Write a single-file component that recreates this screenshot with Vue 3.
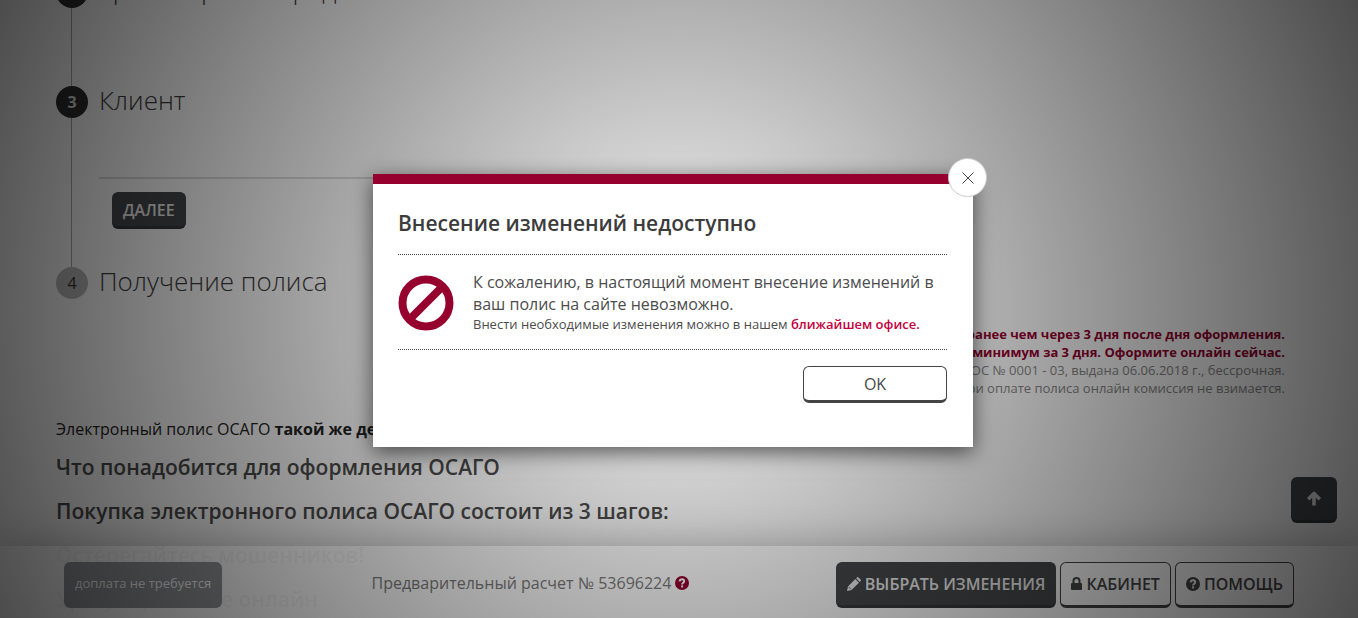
<script setup>
import { ref } from 'vue'

const open = ref(true)
const notes = [
  { text: 'не ранее чем через 3 дня после дня оформления.', strong: true },
  { text: 'минимум за 3 дня. Оформите онлайн сейчас.', strong: true },
  { text: 'ОС № 0001 - 03, выдана 06.06.2018 г., бессрочная.', strong: false },
  { text: 'При оплате полиса онлайн комиссия не взимается.', strong: false },
]
const sections = [
  'Что понадобится для оформления ОСАГО',
  'Покупка электронного полиса ОСАГО состоит из 3 шагов:',
  'Остерегайтесь мошенников!',
  'Урегулирование онлайн',
]
</script>

<template>
  <div class="screen">
    <main class="page">
      <section class="step step-vehicle">
        <span class="num">2</span>
        <h2>Транспортное средство</h2>
      </section>
      <section class="step step-client">
        <span class="num">3</span>
        <div class="step-body">
          <h2>Клиент</h2>
          <div class="step-actions">
            <button class="btn dark next" type="button">ДАЛЕЕ</button>
          </div>
        </div>
      </section>
      <section class="step step-policy">
        <span class="num muted">4</span>
        <h2>Получение полиса</h2>
      </section>
      <div class="notes">
        <p v-for="n in notes" :key="n.text" :class="{ strong: n.strong }">{{ n.text }}</p>
      </div>
      <p class="lead">Электронный полис ОСАГО <b>такой же действительный</b></p>
      <h3 v-for="s in sections" :key="s">{{ s }}</h3>
    </main>

    <button class="btn dark to-top" type="button" aria-label="Наверх">
      <svg width="16" height="16" viewBox="0 0 16 16"><path d="M8 14.500V3.500M2.200 8.300L8 2.500L13.800 8.300" fill="none" stroke="currentColor" stroke-width="3.600" stroke-linejoin="round" /></svg>
    </button>

    <footer class="bar">
      <div class="bar-inner">
        <div><span class="chip">доплата не требуется</span></div>
        <div class="bar-main">
          <span class="calc">Предварительный расчет № 53696224
            <svg class="help" width="14" height="14" viewBox="0 0 14 14"><circle cx="7" cy="7" r="7" fill="currentColor" /><path d="M4.700 5.300C4.900 3.700 6 3.300 7 3.300C8.200 3.300 9.200 4 9.200 5.200C9.200 6.800 7.100 6.700 7.100 8.500" fill="none" stroke="#fff" stroke-width="2" /><rect x="6.100" y="9.400" width="2" height="2" fill="#fff" /></svg>
          </span>
          <div class="bar-buttons">
            <button class="btn dark" type="button">
              <svg width="14" height="14" viewBox="0 0 14 14"><path fill="currentColor" d="M0 14L1 9.400L8.300 2.100L11.900 5.700L4.600 13ZM9.100 1.300L10 .4Q10.700-.2 11.400.4L13.600 2.600Q14.200 3.300 13.600 4L12.700 4.900Z" /><path d="M1.800 10.100L3.900 12.200" stroke="#45484b" stroke-width=".8" /></svg>
              <span>ВЫБРАТЬ ИЗМЕНЕНИЯ</span>
            </button>
            <button class="btn light" type="button">
              <svg width="11" height="14" viewBox="0 0 11 14"><rect y="6" width="11" height="7" rx="1" fill="currentColor" /><path d="M2.500 6.500V4a3 3 0 0 1 6 0V6.500" fill="none" stroke="currentColor" stroke-width="2" /></svg>
              <span>КАБИНЕТ</span>
            </button>
            <button class="btn light" type="button">
              <svg width="14" height="14" viewBox="0 0 14 14"><circle cx="7" cy="7" r="7" fill="currentColor" /><path d="M4.700 5.300C4.900 3.700 6 3.300 7 3.300C8.200 3.300 9.200 4 9.200 5.200C9.200 6.800 7.100 6.700 7.100 8.500" fill="none" stroke="#fff" stroke-width="2" /><rect x="6.100" y="9.400" width="2" height="2" fill="#fff" /></svg>
              <span>ПОМОЩЬ</span>
            </button>
          </div>
        </div>
      </div>
    </footer>

    <div v-if="open" class="overlay">
      <div class="modal" role="dialog" aria-modal="true" aria-labelledby="dialog-title">
        <button class="close" type="button" aria-label="Закрыть" @click="open = false">
          <svg width="12" height="12" viewBox="0 0 12 12"><path d="M.5 .5L11.500 11.500M11.500 .5L.5 11.500" stroke="#444" stroke-width="1" /></svg>
        </button>
        <h1 id="dialog-title">Внесение изменений недоступно</h1>
        <div class="message">
          <svg class="ban" width="56" height="56" viewBox="0 0 56 56" fill="none" stroke="#96002f" stroke-width="8"><circle cx="28" cy="28" r="23.500" /><path d="M11.500 44.500L44.500 11.500" /></svg>
          <div>
            <p class="text">К сожалению, в настоящий момент внесение изменений в ваш полис на сайте невозможно.</p>
            <p class="small">Внести необходимые изменения можно в нашем <a href="#">ближайшем офисе.</a></p>
          </div>
        </div>
        <div class="modal-actions">
          <button class="btn light ok" type="button" @click="open = false">OK</button>
        </div>
      </div>
    </div>
  </div>
</template>

<style>
body {
  margin: 0;
}
</style>

<style scoped>
.screen {
  position: relative;
  height: 100vh;
  overflow: hidden;
  background: #fff;
  color: #3c3c3c;
  font-family: "Open Sans", "Noto Sans", sans-serif;
  font-size: 16px;
}
h1, h2, h3, p {
  margin: 0;
}
button {
  font-family: inherit;
  cursor: pointer;
}
svg {
  flex: none;
}
.page {
  margin-top: -24px;
  padding: 0 73px 0 56px;
}
.step {
  position: relative;
  display: flex;
  gap: 11px;
}
.step-vehicle {
  height: 110px;
}
.step-client {
  height: 181px;
}
.step-policy {
  height: 58px;
}
.step:not(.step-policy)::before {
  content: "";
  position: absolute;
  left: 15px;
  top: 0;
  bottom: 0;
  width: 1px;
  background: #aaa;
}
.num {
  position: relative;
  flex: none;
  width: 32px;
  height: 32px;
  border-radius: 50%;
  background: #2e2e2e;
  color: #ddd;
  font-weight: 700;
  line-height: 32px;
  text-align: center;
}
.num.muted {
  background: #bbb;
  color: #333;
  font-weight: 400;
}
h2 {
  font-size: 26px;
  font-weight: 300;
  line-height: 28px;
}
.step-vehicle h2 {
  line-height: 26px;
}
.step-body {
  flex: 1;
}
.step-actions {
  width: 60%;
  margin-top: 63px;
  padding: 13px;
  border-top: 2px solid #ddd;
}
.btn {
  display: inline-flex;
  align-items: center;
  justify-content: center;
  gap: 4px;
  box-sizing: border-box;
  height: 46px;
  padding: 0 10px;
  border: 1px solid #444;
  border-bottom-width: 3px;
  border-radius: 6px;
  font-size: 16px;
}
.dark {
  background: #45484b;
  border-color: #45484b;
  border-bottom-color: #36393b;
  color: #eee;
  font-weight: 600;
}
.light {
  background: transparent;
  color: #484848;
  font-weight: 600;
}
.next {
  height: 37px;
}
.notes {
  font-size: 13px;
  line-height: 18px;
  text-align: right;
  color: #888;
}
.notes .strong {
  color: #96002f;
  font-weight: 700;
}
.lead {
  margin-top: 20px;
  line-height: 24px;
  color: #222;
}
h3 {
  margin-top: 14px;
  font-size: 21px;
  font-weight: 600;
  line-height: 30px;
  color: #4c4c4c;
}
.lead + h3 {
  margin-top: 11px;
}
.to-top {
  position: absolute;
  right: 21px;
  bottom: 95px;
  width: 46px;
}
.bar {
  position: absolute;
  left: 0;
  right: 0;
  bottom: 0;
  padding: 16px 64px 10px;
  background: rgba(255, 255, 255, 0.95);
  box-shadow: 0 0 40px rgba(0, 0, 0, 0.25);
}
.bar-inner {
  display: grid;
  grid-template-columns: 1fr 3fr;
}
.chip {
  display: inline-block;
  padding: 0 11px 4px;
  border-radius: 6px;
  background: #93979b;
  color: #fff;
  font-size: 13px;
  line-height: 42px;
}
.bar-main {
  display: flex;
  align-items: center;
  justify-content: space-between;
}
.calc {
  display: flex;
  align-items: center;
  gap: 4px;
  padding-bottom: 4px;
  color: #7c7c7c;
}
.help {
  color: #96002f;
}
.bar-buttons {
  display: flex;
  gap: 4px;
}
.overlay {
  position: absolute;
  inset: 0;
  display: grid;
  place-items: center;
  padding: 3px 12px 0 0;
  background: radial-gradient(circle at center, rgba(0, 0, 0, 0.04), rgba(0, 0, 0, 0.7));
}
.modal {
  position: relative;
  box-sizing: border-box;
  width: 600px;
  max-width: 100%;
  padding: 24px 26px 44px 25px;
  border-top: 10px solid #96002f;
  background: #fff;
  box-shadow: 0 5px 20px rgba(0, 0, 0, 0.6);
}
.close {
  position: absolute;
  top: -26px;
  right: -14px;
  display: grid;
  place-items: center;
  width: 39px;
  height: 39px;
  padding: 0;
  border: 1px solid #ccc;
  border-radius: 50%;
  background: #fff;
}
h1 {
  padding-bottom: 16px;
  border-bottom: 1px dotted #444;
  font-size: 21px;
  font-weight: 600;
  line-height: 30px;
}
.message {
  display: flex;
  gap: 19px;
  padding: 16px 0 14px;
  border-bottom: 1px dotted #444;
}
.ban {
  margin-top: 4px;
}
.text {
  line-height: 22px;
  color: #4c4c4c;
}
.small {
  padding-bottom: 2px;
  font-size: 13px;
  line-height: 18px;
  color: #4c4c4c;
}
a {
  color: #c3003d;
  font-weight: 600;
  text-decoration: none;
}
.modal-actions {
  display: flex;
  justify-content: flex-end;
  padding-top: 16px;
}
.ok {
  width: 144px;
  height: 37px;
  font-weight: 500;
}
</style>
